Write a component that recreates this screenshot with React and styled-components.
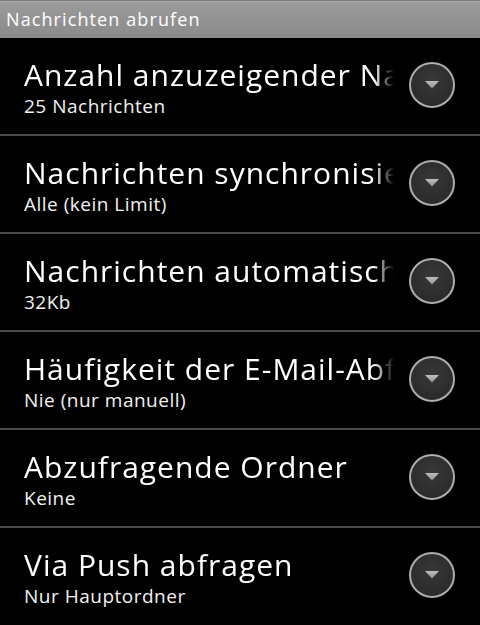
import styled, { createGlobalStyle } from "styled-components";

const GlobalStyle = createGlobalStyle`
  html, body {
    margin: 0;
    padding: 0;
    background: #000;
  }
  body {
    font-family: "Open Sans", "DejaVu Sans", sans-serif;
    color: #fff;
  }
`;

const Screen = styled.div`
  width: 480px;
  height: 625px;
  overflow: hidden;
  background: #000;
`;

const TitleBar = styled.div`
  height: 38px;
  box-sizing: border-box;
  border-top: 1px solid #7a7a7a;
  background: linear-gradient(#a6a6a6 0px, #9a9a9a 3px, #8a8a8a 100%);
  display: flex;
  align-items: center;
  padding: 0 6px 2px;
  font-size: 18px;
  color: #fff;
  letter-spacing: 1.1px;
`;

const List = styled.div`
  display: flex;
  flex-direction: column;
`;

const Row = styled.div`
  height: 96px;
  display: flex;
  align-items: center;
  padding: 0 24px;
  border-bottom: 2px solid #4a4a4a;
  &:last-child {
    border-bottom: none;
  }
`;

const Texts = styled.div`
  flex: 1;
  min-width: 0;
  display: flex;
  flex-direction: column;
  padding-top: 2px;
`;

const Title = styled.div`
  width: 370px;
  font-size: 30px;
  line-height: 36px;
  white-space: nowrap;
  overflow: hidden;
  letter-spacing: 1px;
  -webkit-mask-image: linear-gradient(to right, #000 350px, transparent 370px);
  mask-image: linear-gradient(to right, #000 350px, transparent 370px);
`;

const Summary = styled.div`
  font-size: 19px;
  line-height: 24px;
  margin-top: 1px;
  letter-spacing: 0.5px;
  color: #f2f2f2;
`;

const Knob = styled.div`
  width: 46px;
  height: 46px;
  box-sizing: border-box;
  border-radius: 50%;
  border: 2px solid #adadad;
  background: radial-gradient(circle at 50% 40%, #383838, #262626);
  display: flex;
  align-items: center;
  justify-content: center;
  margin-right: 1px;
  margin-top: -3px;
`;

const items = [
  { title: "Anzahl anzuzeigender Nachrichten", summary: "25 Nachrichten" },
  { title: "Nachrichten synchronisieren", summary: "Alle (kein Limit)" },
  { title: "Nachrichten automatisch herunterladen", summary: "32Kb" },
  { title: "Häufigkeit der E-Mail-Abfrage", summary: "Nie (nur manuell)" },
  { title: "Abzufragende Ordner", summary: "Keine" },
  { title: "Via Push abfragen", summary: "Nur Hauptordner" },
];

const Arrow = () => (
  <svg width="16" height="9" viewBox="0 0 16 9">
    <defs>
      <linearGradient id="tri" x1="0" y1="0" x2="0" y2="1">
        <stop offset="0" stopColor="#bdbdbd" />
        <stop offset="1" stopColor="#949494" />
      </linearGradient>
    </defs>
    <path d="M1 1 H15 L8 8.5 Z" fill="url(#tri)" />
  </svg>
);

export default function App() {
  return (
    <>
      <GlobalStyle />
      <Screen>
        <TitleBar>Nachrichten abrufen</TitleBar>
        <List>
          {items.map((item) => (
            <Row key={item.title}>
              <Texts>
                <Title>{item.title}</Title>
                <Summary>{item.summary}</Summary>
              </Texts>
              <Knob>
                <Arrow />
              </Knob>
            </Row>
          ))}
        </List>
      </Screen>
    </>
  );
}
